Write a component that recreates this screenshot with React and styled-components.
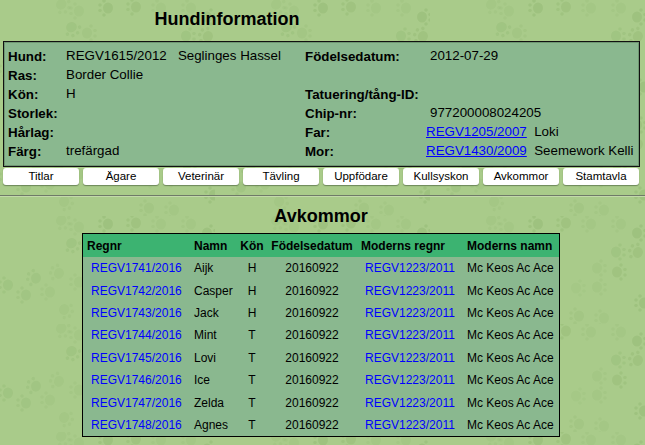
import React from "react";
import styled, { createGlobalStyle } from "styled-components";

const GlobalStyle = createGlobalStyle`
  html, body {
    margin: 0;
    padding: 0;
    background: #a9cb8a;
  }
  body {
    font-family: "Liberation Sans", Arial, sans-serif;
    font-size: 12px;
    color: #000;
  }
`;

const Page = styled.div`
  position: relative;
  width: 645px;
  height: 445px;
  overflow: hidden;
  padding: 0 3px;
  box-sizing: border-box;
`;

const PawLayer = styled.svg`
  position: absolute;
  left: 0;
  top: 0;
  width: 645px;
  height: 445px;
`;

const Content = styled.div`
  position: relative;
`;

const Title = styled.h1`
  margin: 0;
  width: 448px;
  height: 41px;
  box-sizing: border-box;
  padding-top: 9px;
  font-size: 18px;
  line-height: 20px;
  text-align: center;
`;

const InfoBox = styled.div`
  box-sizing: border-box;
  width: 637px;
  height: 126px;
  padding: 4px 4px 0 4px;
  border: 1px solid #111;
  box-shadow: inset 0 0 0 1px rgba(60, 90, 60, 0.35);
  background: #8ab88f;
  display: grid;
  grid-template-columns: 58px 239px 121px 1fr;
  grid-auto-rows: 19px;
  align-items: center;
`;

const Label = styled.div`
  font-weight: bold;
  font-size: 13.33px;
  white-space: nowrap;
  padding-top: 2px;
`;

const Value = styled.div`
  font-size: 13.33px;
  white-space: pre;
  padding-left: ${p => p.$indent || 0}px;
`;

const Link = styled.a`
  color: #0000ff;
  text-decoration: ${p => (p.$plain ? "none" : "underline")};
`;

const Tabs = styled.div`
  display: flex;
  gap: 4px;
  margin-top: 1px;
`;

const Tab = styled.div`
  width: 76px;
  height: 17px;
  box-sizing: border-box;
  border-radius: 3px;
  background: #fff;
  box-shadow: 0 1px 1px rgba(60, 80, 50, 0.55);
  font-size: 11.5px;
  line-height: 17px;
  text-align: center;
`;

const Rule = styled.hr`
  margin: 10px -3px 0;
  border: 0;
  height: 2px;
  background: linear-gradient(#6f7a68 0 1px, #c3d9aa 1px 2px);
`;

const SubTitle = styled.h2`
  margin: 0;
  height: 36px;
  box-sizing: border-box;
  padding-top: 9px;
  width: 636px;
  font-size: 18px;
  line-height: 20px;
  text-align: center;
`;

const Table = styled.table`
  margin-left: 79px;
  width: 478px;
  border: 1px solid #000;
  border-collapse: separate;
  border-spacing: 0;
  background: #8ab88f;
  table-layout: fixed;
`;

const HeadCell = styled.th`
  height: 23px;
  padding: 0 0 0 ${p => p.$pad || 0}px;
  background: #3cb371;
  font-size: 12px;
  text-align: ${p => p.$align || "left"};
`;

const Cell = styled.td`
  height: 22.4px;
  padding: 0 0 0 ${p => p.$pad || 0}px;
  font-size: 12px;
  text-align: ${p => p.$align || "left"};
`;

const TABS = ["Titlar", "Ägare", "Veterinär", "Tävling", "Uppfödare", "Kullsyskon", "Avkommor", "Stamtavla"];

const PUPS = [
  ["REGV1741/2016", "Aijk", "H"],
  ["REGV1742/2016", "Casper", "H"],
  ["REGV1743/2016", "Jack", "H"],
  ["REGV1744/2016", "Mint", "T"],
  ["REGV1745/2016", "Lovi", "T"],
  ["REGV1746/2016", "Ice", "T"],
  ["REGV1747/2016", "Zelda", "T"],
  ["REGV1748/2016", "Agnes", "T"],
];

// x, y, toe direction, strength: one tile of the wallpaper
const PAWS = [
  [62, 5, 130, 0.5], [78, 11, -90, 0.5], [107, 8, -90, 1], [135, 7, -90, 0.9], [160, 8, -90, 0.5],
  [190, 8, -90, 0.5], [208, 17, 90, 1], [72, 28, 150, 0.8], [88, 33, 90, 0.6], [207, 36, -60, 0.9],
  [187, 36, 90, 0.8], [65, 94, 120, 0.5], [58, 57, -70, 0.5], [78, 66, -90, 0.5], [35, 62, -80, 0.7],
  [7, 69, -90, 0.8], [25, 79, -90, 0.7], [49, 76, -90, 0.5], [213, 87, -90, 1], [148, 100, -90, 0.6],
  [173, 102, -90, 0.5], [168, 52, 90, 0.5], [188, 56, 90, 0.9], [147, 72, 90, 0.4], [168, 71, 90, 0.5],
];

function Parent({ id, name }) {
  return (
    <Value>
      <Link href="#">{id}</Link>
      {"  "}
      {name}
    </Value>
  );
}

const INFO = [
  ["Hund:", <>REGV1615/2012{"   "}Seglinges Hassel</>, "Födelsedatum:", "2012-07-29"],
  ["Ras:", "Border Collie", "", ""],
  ["Kön:", "H", "Tatuering/tång-ID:", ""],
  ["Storlek:", "", "Chip-nr:", "977200008024205"],
  ["Hårlag:", "", "Far:", <Parent id="REGV1205/2007" name="Loki" />],
  ["Färg:", "trefärgad", "Mor:", <Parent id="REGV1430/2009" name="Seemework Kelli" />],
];

function Paw({ x, y, dir, strength }) {
  return (
    <g transform={`translate(${x} ${y}) rotate(${dir})`} fill="#98bd78" opacity={strength * 0.62}>
      <ellipse cx="0" cy="1" rx="5.5" ry="5" />
      <circle cx="-7" cy="-3" r="1.8" />
      <circle cx="-2.5" cy="-7" r="1.8" />
      <circle cx="3" cy="-7" r="1.8" />
      <circle cx="7" cy="-3" r="1.8" />
    </g>
  );
}

export default function App() {
  return (
    <Page>
      <GlobalStyle />
      <PawLayer viewBox="0 0 645 445">
        <defs>
          <pattern id="paws" width="215" height="108" patternUnits="userSpaceOnUse">
            {PAWS.map(([x, y, dir, strength], i) => (
              <Paw key={i} x={x} y={y} dir={dir} strength={strength} />
            ))}
          </pattern>
        </defs>
        <rect width="645" height="445" fill="url(#paws)" />
      </PawLayer>
      <Content>
        <Title>Hundinformation</Title>
        <InfoBox>
          {INFO.map(([a, b, c, d], i) => (
            <React.Fragment key={i}>
              <Label>{a}</Label>
              <Value>{b}</Value>
              <Label>{c}</Label>
              {typeof d === "string" ? <Value $indent={4}>{d}</Value> : d}
            </React.Fragment>
          ))}
        </InfoBox>
        <Tabs>
          {TABS.map(t => (
            <Tab key={t}>{t}</Tab>
          ))}
        </Tabs>
        <Rule />
        <SubTitle>Avkommor</SubTitle>
        <Table>
          <colgroup>
            <col style={{ width: 111 }} />
            <col style={{ width: 44 }} />
            <col style={{ width: 28 }} />
            <col style={{ width: 92 }} />
            <col style={{ width: 109 }} />
            <col />
          </colgroup>
          <thead>
            <tr>
              <HeadCell $pad={4}>Regnr</HeadCell>
              <HeadCell>Namn</HeadCell>
              <HeadCell $align="center">Kön</HeadCell>
              <HeadCell $align="center">Födelsedatum</HeadCell>
              <HeadCell $pad={3}>Moderns regnr</HeadCell>
              <HeadCell>Moderns namn</HeadCell>
            </tr>
          </thead>
          <tbody>
            {PUPS.map(([id, name, sex]) => (
              <tr key={id}>
                <Cell $pad={8}>
                  <Link $plain href="#">{id}</Link>
                </Cell>
                <Cell>{name}</Cell>
                <Cell $align="center">{sex}</Cell>
                <Cell $align="center">20160922</Cell>
                <Cell $pad={7}>
                  <Link $plain href="#">REGV1223/2011</Link>
                </Cell>
                <Cell>Mc Keos Ac Ace</Cell>
              </tr>
            ))}
          </tbody>
        </Table>
      </Content>
    </Page>
  );
}
